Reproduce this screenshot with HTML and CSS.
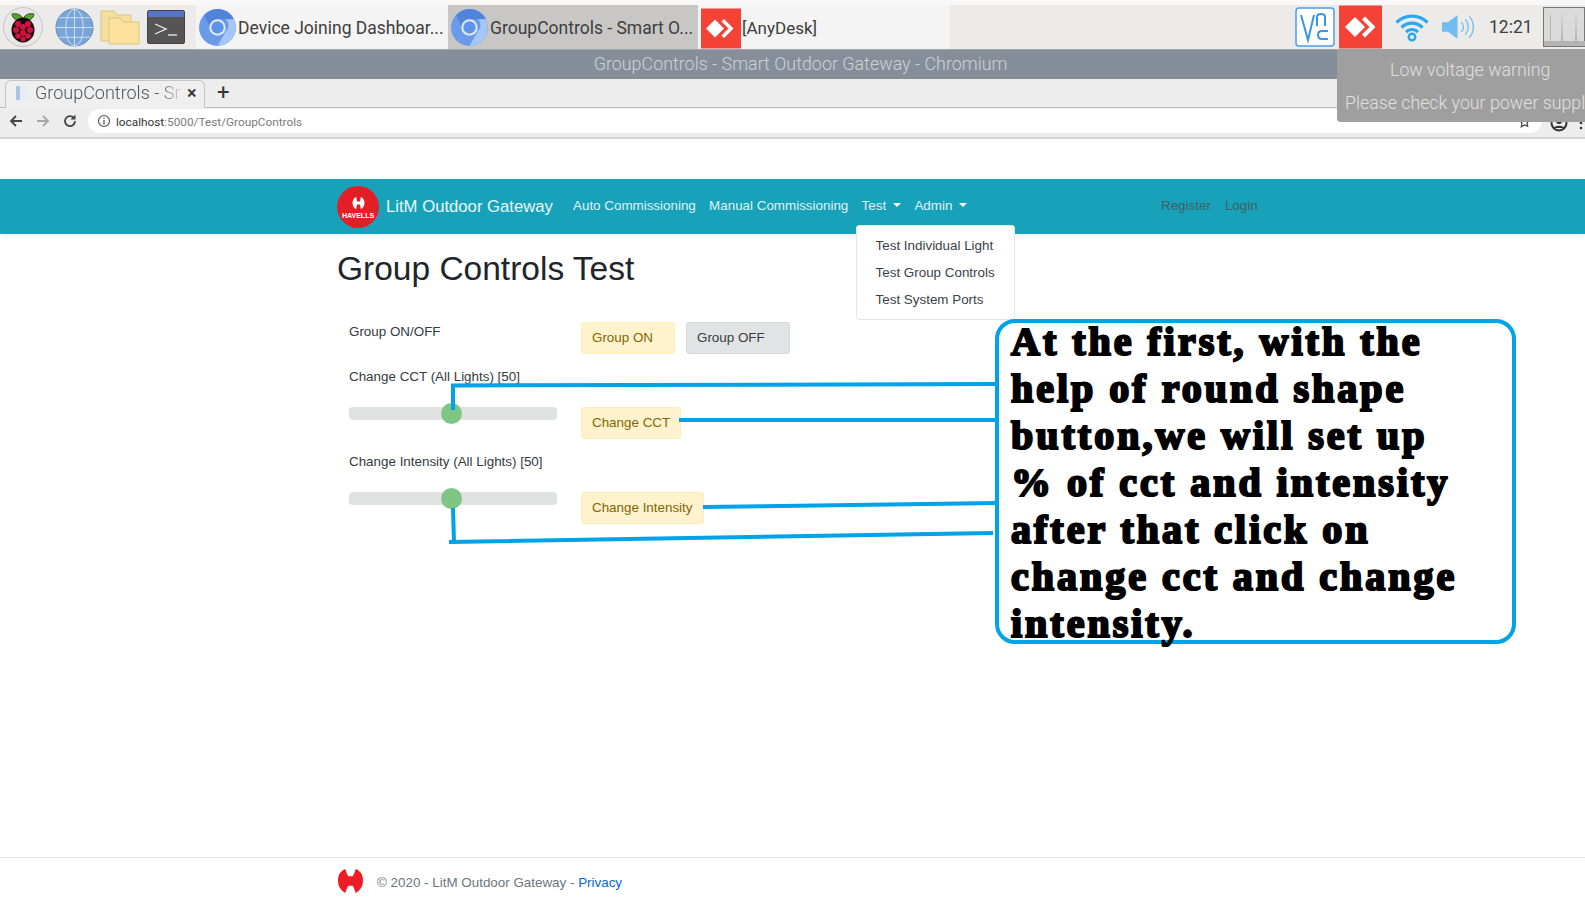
FILE: index.html
```html
<!DOCTYPE html>
<html lang="en">
<head>
<meta charset="utf-8">
<title>GroupControls - Smart Outdoor Gateway</title>
<link rel="stylesheet" href="styles.css">
</head>
<body>
<div class="screen">
  <header class="taskbar">
    <div class="launchers">
      <svg class="launch-menu" viewBox="0 0 40 40"><circle cx="20" cy="20" r="19.500" fill="#e8e8e8" stroke="#c4c4c4"/><path d="M20 12C18 7 13 6 9 7c0 4 5 8 11 7 6 1 11-3 11-7-4-1-9 0-11 5z" fill="#55a630" stroke="#1d3a10" stroke-width=".8"/><ellipse cx="20" cy="23" rx="11.500" ry="12.500" fill="#1a0a0e"/><g fill="#d3123f"><circle cx="15" cy="17" r="3"/><circle cx="25" cy="17" r="3"/><circle cx="20" cy="20" r="3"/><circle cx="13" cy="23" r="3"/><circle cx="27" cy="23" r="3"/><circle cx="20" cy="26" r="3"/><circle cx="15" cy="29" r="2.800"/><circle cx="25" cy="29" r="2.800"/><circle cx="20" cy="32" r="2.500"/></g></svg>
      <svg class="launch-globe" viewBox="0 0 40 40"><circle cx="20" cy="20" r="19" fill="#7aa5d8" stroke="#5b87bd"/><g fill="none" stroke="#cfe0f2" stroke-width="1"><ellipse cx="20" cy="20" rx="9" ry="19"/><path d="M20 1v38M1 20h38M4 10h32M4 30h32"/></g></svg>
      <svg class="launch-folder" viewBox="0 0 40 36"><path d="M1 2h13l3 4h14v26H1z" fill="#f5dfa0" stroke="#dcc67f"/><path d="M9 9h11l3 4h16v22H9z" fill="#fae29c" stroke="#dcc67f"/></svg>
      <svg class="launch-term" viewBox="0 0 38 34"><rect x=".5" y=".5" width="37" height="33" rx="1.500" fill="#555" stroke="#444"/><rect x="1" y="1" width="36" height="6" fill="#5874c8"/><path d="M8 14l11 5-11 5" fill="none" stroke="#eee" stroke-width="1.300"/><path d="M21 25h9" stroke="#eee" stroke-width="1.300"/></svg>
    </div>
    <div class="task task-one">
      <svg class="chrome" viewBox="0 0 36 36"><circle cx="18" cy="18" r="18" fill="#6a9bea"/><path d="M18 0a18 18 0 0 1 16 10H18a8 8 0 0 0-8 6L5 6a18 18 0 0 1 13-6z" fill="#4f84dd"/><path d="M34 10a18 18 0 0 1-16 26l8-14a8 8 0 0 0 0-12z" fill="#a6c6f5"/><circle cx="18" cy="18" r="8" fill="#dfe9fa"/><circle cx="18" cy="18" r="6" fill="#5f93e8"/></svg>
      <span>Device Joining Dashboar...</span>
    </div>
    <div class="task task-two">
      <svg class="chrome" viewBox="0 0 36 36"><circle cx="18" cy="18" r="18" fill="#6a9bea"/><path d="M18 0a18 18 0 0 1 16 10H18a8 8 0 0 0-8 6L5 6a18 18 0 0 1 13-6z" fill="#4f84dd"/><path d="M34 10a18 18 0 0 1-16 26l8-14a8 8 0 0 0 0-12z" fill="#a6c6f5"/><circle cx="18" cy="18" r="8" fill="#dfe9fa"/><circle cx="18" cy="18" r="6" fill="#5f93e8"/></svg>
      <span>GroupControls - Smart O...</span>
    </div>
    <div class="task task-three">
      <svg class="desk-logo" viewBox="0 0 40 40"><rect width="40" height="40" fill="#f44336"/><path d="M5 20l9-9 9 9-9 9z" fill="#fff"/><path d="M23 10.500l9.500 9.500-9.500 9.500-2.500-2.500 7-7-7-7z" fill="#fff"/></svg>
      <span class="desk-name">[AnyDesk]</span>
    </div>
    <div class="tray">
      <svg class="tray-vnc" viewBox="0 0 40 40"><rect x="1" y="1" width="38" height="38" rx="3" fill="#fff" stroke="#4a9ee8" stroke-width="1.500"/><g fill="none" stroke="#3a94e4" stroke-width="2"><path d="M6 8l7 25 6-25"/><path d="M22 19V10c0-2 1-3 4-3s4 1 4 3v9"/><path d="M33 24h-6c-2.500 0-4 1-4 4s1.500 4 4 4h6"/></g></svg>
      <svg class="tray-desk" viewBox="0 0 43 43"><rect width="43" height="43" fill="#f44336"/><path d="M6 21.500l10-10 10 10-10 10z" fill="#fff"/><path d="M26 11l10.500 10.500L26 32l-3-3 7.500-7.500L23 14z" fill="#fff"/></svg>
      <svg class="tray-wifi" viewBox="0 0 34 30"><g fill="none" stroke="#28a8f0" stroke-width="3.200"><path d="M1.500 10.500a22 22 0 0 1 31 0"/><path d="M6.500 15.500a15 15 0 0 1 21 0"/><path d="M11 20a8.500 8.500 0 0 1 12 0"/></g><circle cx="17" cy="25" r="3.200" fill="#fff" stroke="#28a8f0" stroke-width="2.500"/></svg>
      <svg class="tray-vol" viewBox="0 0 34 26"><path d="M1 8h6l10-7v24L7 18H1z" fill="#70bdf0"/><g fill="none" stroke="#70bdf0" stroke-width="1.300"><path d="M21 8a7 7 0 0 1 0 10"/><path d="M25 5a12 12 0 0 1 0 16"/><path d="M29 2a16 16 0 0 1 0 22"/></g></svg>
      <span class="clock">12:21</span>
      <svg class="cpu" viewBox="0 0 42 40"><rect x=".5" y=".5" width="41" height="39" fill="#dadada" stroke="#777"/><path d="M1 39V34h6V8h1v26h10l1-30 1 30h12l1-30 1 30h8v5z" fill="#b4b4b4"/></svg>
    </div>
  </header>
  <div class="titlebar">GroupControls - Smart Outdoor Gateway - Chromium</div>
  <div class="tabstrip">
    <div class="tab">
      <svg class="favicon" viewBox="0 0 12 14"><rect width="12" height="14" fill="#e6edf5"/><rect width="4" height="14" fill="#a9c5e6"/></svg>
      <span class="tab-title">GroupControls - Sn</span>
      <span class="tab-close">×</span>
    </div>
    <span class="tab-new">+</span>
  </div>
  <div class="toolbar">
    <svg class="tool" viewBox="0 0 16 16"><path d="M14 8H3M8 3L3 8l5 5" fill="none" stroke="#444" stroke-width="1.800"/></svg>
    <svg class="tool tool-fwd" viewBox="0 0 16 16"><path d="M2 8h11M8 3l5 5-5 5" fill="none" stroke="#a6a6a6" stroke-width="1.800"/></svg>
    <svg class="tool tool-reload" viewBox="0 0 16 16"><path d="M13 8a5 5 0 1 1-1.500-3.500" fill="none" stroke="#444" stroke-width="1.800"/><path d="M13.500 1.500v5h-5z" fill="#444"/></svg>
    <div class="omnibox">
      <svg class="info" viewBox="0 0 14 14"><circle cx="7" cy="7" r="5.500" fill="none" stroke="#555" stroke-width="1.200"/><path d="M7 6v4.500M7 3.500v1.300" stroke="#555" stroke-width="1.300"/></svg>
      <span class="url"><span class="url-host">localhost</span>:5000/Test/GroupControls</span>
      <svg class="star" viewBox="0 0 14 14"><path d="M7 1.500l1.700 3.600 3.800.5-2.800 2.700.7 3.900L7 10.800l-3.400 1.900.7-3.900L1.500 5.600l3.800-.5z" fill="none" stroke="#444" stroke-width="1.300"/></svg>
    </div>
    <svg class="profile" viewBox="0 0 18 18"><circle cx="9" cy="9" r="7.500" fill="none" stroke="#333" stroke-width="2"/><circle cx="9" cy="7" r="3" fill="#333"/><path d="M3.500 14c2-3 9-3 11 0" fill="#333"/></svg>
    <svg class="dots" viewBox="0 0 4 16"><circle cx="2" cy="3" r="1.300" fill="#333"/><circle cx="2" cy="8" r="1.300" fill="#333"/><circle cx="2" cy="13" r="1.300" fill="#333"/></svg>
  </div>

  <div class="page">
    <nav class="navbar">
      <div class="brand-logo">
        <svg class="brand-mark" viewBox="0 0 20 18"><path d="M2 9c0-4 2-7 5-8l1 6h4l1-6c3 1 5 4 5 8s-2 7-5 8l-1-6H8l-1 6C4 16 2 13 2 9z" fill="#fff"/></svg>
        <span class="brand-word">HAVELLS</span>
      </div>
      <span class="brand-name">LitM Outdoor Gateway</span>
      <ul class="nav-main">
        <li>Auto Commissioning</li>
        <li>Manual Commissioning</li>
        <li class="nav-caret nav-test">Test<ul class="dropdown">
            <li>Test Individual Light</li>
            <li>Test Group Controls</li>
            <li>Test System Ports</li>
          </ul></li>
        <li class="nav-caret">Admin</li>
      </ul>
      <ul class="nav-user">
        <li>Register</li>
        <li>Login</li>
      </ul>
    </nav>

    <main class="content">
      <h1>Group Controls Test</h1>
      <div class="row">
        <label class="col-left col-label">Group ON/OFF</label>
        <div class="col-right">
          <button class="btn btn-warn btn-on">Group ON</button>
          <button class="btn btn-off">Group OFF</button>
        </div>
      </div>
      <label class="field-label">Change CCT (All Lights) [50]</label>
      <div class="row row-slider">
        <div class="col-left"><div class="track"><span class="thumb"></span></div></div>
        <div class="col-right"><button class="btn btn-warn">Change CCT</button></div>
      </div>
      <label class="field-label">Change Intensity (All Lights) [50]</label>
      <div class="row row-slider">
        <div class="col-left"><div class="track"><span class="thumb"></span></div></div>
        <div class="col-right"><button class="btn btn-warn">Change Intensity</button></div>
      </div>
    </main>

    <footer class="footer">
      <svg class="foot-logo" viewBox="0 0 26 25"><path d="M1 12C1 7 3 3 8 1c1 3 2 6 3 7h4c1-1 2-4 3-7 5 2 7 6 7 11s-2 9-7 12c-1-3-2-6-3-7h-4c-1 1-2 4-3 7-5-3-7-7-7-12z" fill="#ed1c24"/></svg>
      <span class="foot-text">© 2020 - LitM Outdoor Gateway - <a class="privacy">Privacy</a></span>
    </footer>
  </div>

  <aside class="toast">
    <p class="toast-title">Low voltage warning</p>
    <p class="toast-body">Please check your power supply</p>
  </aside>

  <svg class="leaders" viewBox="0 0 1585 901">
    <g fill="none" stroke="#00a2e8" stroke-width="4">
      <path d="M453 410V385.500L998 384"/>
      <path d="M679 420H998"/>
      <path d="M703 507L998 503"/>
      <path d="M453 508L454 542H449L993 533"/>
    </g>
  </svg>

  <div class="callout"><div class="callout-text">At the first, with the<br>help of round shape<br>button,we will set up<br>% of cct and intensity<br>after that click on<br>change cct and change<br>intensity.</div></div>
</div>
</body>
</html>
```

FILE: styles.css
```css
* { box-sizing: border-box; }
html, body { margin: 0; padding: 0; }
body { background: #fff; font-family: "Liberation Sans", Arial, sans-serif; }
.screen { position: relative; width: 1585px; height: 901px; overflow: hidden; display: flex; flex-direction: column; }

/* taskbar */
.taskbar { height: 49px; flex: none; margin: 0; border-top: 5px solid #f8f8f8; background: #ecebe9; display: flex; font-family: Roboto, sans-serif; font-size: 17.500px; color: #3e3e3e; }
.launchers { width: 196px; display: flex; align-items: center; padding-left: 3px; }
.launch-menu { width: 40px; height: 40px; margin-right: 12px; }
.launch-globe { width: 39px; height: 39px; margin-right: 6px; }
.launch-folder { width: 40px; height: 36px; margin-right: 7px; }
.launch-term { width: 38px; height: 34px; }
.task { display: flex; align-items: center; white-space: nowrap; }
.task span { padding-top: 1px; }
.chrome { width: 37px; height: 37px; flex: none; margin-right: 2px; }
.task-one { width: 252px; background: #f4f4f4; padding-left: 3px; }
.task-two { width: 250px; background: #c9c7c5; padding-left: 3px; }
.task-three { width: 252px; background: #f4f4f4; padding-left: 3px; }
.desk-logo { width: 40px; height: 41px; flex: none; margin-right: 2px; align-self: flex-end; }
.task .desk-name { font-size: 17px; margin-left: -1px; }
.tray { margin-left: auto; display: flex; align-items: center; height: 44px; }
.tray-vnc { width: 40px; height: 40px; margin-right: 4px; }
.tray-desk { width: 43px; height: 44px; margin-right: 13px; }
.tray-wifi { width: 34px; height: 30px; margin-right: 12px; }
.tray-vol { width: 33px; height: 26px; margin-right: 15px; }
.clock { width: 54px; }
.cpu { width: 42px; height: 40px; }

/* window title */
.titlebar { height: 30px; flex: none; background: #868f99; color: #cdd1d5; font-family: Roboto, sans-serif; font-weight: 300; font-size: 17.900px; line-height: 28px; text-align: center; border-top: 1px solid #a0a6ad; padding-left: 16px; }

/* tabs */
.tabstrip { height: 29px; flex: none; background: #ededed; border-bottom: 1px solid #bdbdbd; display: flex; align-items: stretch; padding: 1px 0 0 5px; font-family: Roboto, sans-serif; }
.tab { width: 200px; height: 29px; background: #efefef; border: 1px solid #c4c4c4; border-bottom: 0; border-radius: 6px 6px 0 0; display: flex; align-items: center; padding: 0 6px 5px 10px; font-size: 18px; font-weight: 300; color: #4f5357; }
.favicon { width: 12px; height: 14px; flex: none; margin-right: 7px; }
.tab-title { width: 146px; white-space: nowrap; flex: none; -webkit-mask-image: linear-gradient(to right, #000 85%, rgba(0,0,0,.15) 100%); mask-image: linear-gradient(to right, #000 85%, rgba(0,0,0,.15) 100%); }
.tab-close { font-size: 18px; font-weight: 500; margin-left: 6px; color: #333; }
.tab-new { font-size: 22px; line-height: 26px; margin-left: 12px; color: #333; }

/* toolbar */
.toolbar { height: 31px; flex: none; background: #ededed; border-bottom: 2px solid #d4d4d4; display: flex; align-items: center; padding: 0 0 3px 8px; }
.tool { width: 16px; height: 16px; flex: none; }
.tool-fwd { margin-left: 11px; }
.tool-reload { margin-left: 11px; }
.omnibox { width: 1454px; height: 24px; margin-left: 10px; background: #fff; border-radius: 12px; display: flex; align-items: center; padding-left: 9px; font-family: Roboto, sans-serif; font-size: 11.800px; color: #7c7c7c; }
.info { width: 14px; height: 14px; flex: none; margin-right: 6px; }
.url { white-space: nowrap; margin-left: -1px; padding-top: 2px; }
.url-host { color: #333; }
.star { width: 13px; height: 13px; margin-left: auto; margin-right: 11px; flex: none; }
.profile { width: 18px; height: 18px; margin: 3px 3px 0 8px; flex: none; }
.dots { width: 4px; height: 16px; margin: 3px 0 0 8px; flex: none; }

/* page */
.page { flex: 1; min-height: 0; display: flex; flex-direction: column; padding-top: 40px; }
.navbar { height: 55px; flex: none; background: #18a2b9; color: #fff; display: flex; align-items: center; padding: 0 0 2px 337px; box-shadow: 0 2px 6px rgba(0,0,0,.08); }
.brand-logo { width: 42px; height: 42px; border-radius: 50%; background: #e31e26; display: flex; flex-direction: column; align-items: center; justify-content: center; color: #fff; margin: 2px 7px 0 0; }
.brand-mark { width: 15px; height: 14px; margin-top: 2px; }
.brand-word { font-size: 7px; font-weight: 700; line-height: 9px; margin-top: 1px; }
.brand-name { font-size: 16.700px; line-height: 22px; width: 167px; margin: 2px 20px 0 0; white-space: nowrap; color: #e8f7fa; }
.nav-main, .nav-user { list-style: none; margin: 0; padding: 0; display: flex; font-size: 13.400px; color: #dff2f5; }
.nav-main { gap: 13.300px; width: 588px; }
.nav-user { gap: 14px; color: #3f5f66; }
.nav-caret::after { content: ""; display: inline-block; margin-left: 7px; vertical-align: 3px; border-top: 4px solid #fff; border-left: 4px solid transparent; border-right: 4px solid transparent; }
.nav-test { position: relative; }
.dropdown { position: absolute; z-index: 3; left: -6px; top: 27px; width: 159px; height: 95px; margin: 0; padding: 6px 0; list-style: none; background: #fff; border: 1px solid #e3e5e7; border-radius: 3px; color: #3b4148; font-size: 13.400px; }
.dropdown li { height: 27px; line-height: 27px; padding-left: 19px; white-space: nowrap; }

.content { flex: 1; padding-left: 337px; color: #343a40; font-size: 13.400px; }
h1 { margin: 14px 0 32px; font-size: 33.500px; line-height: 42px; font-weight: 400; color: #212529; }
.row { display: flex; height: 32px; padding-left: 12px; }
.row-slider { margin-top: 20px; }
.col-left { width: 232px; flex: none; }
.col-label { line-height: 20px; }
.col-right { display: flex; gap: 11px; }
.field-label { display: block; height: 22px; line-height: 24px; margin: 11px 0 0 12px; }
.track { position: relative; width: 208px; height: 13px; border-radius: 4px; background: #e0e1e1; }
.thumb { position: absolute; left: 92px; top: -4px; width: 21px; height: 21px; border-radius: 50%; background: #7fc684; }
.btn { height: 32px; padding: 0 10px 1px; border-radius: 3px; border: 1px solid; font: 13.400px "Liberation Sans", Arial, sans-serif; }
.btn-warn { background: #fff3cd; border-color: #ffeeba; color: #856404; }
.btn-on { width: 94px; text-align: left; }
.btn-off { width: 104px; text-align: left; background: #e2e3e5; border-color: #d6d8db; color: #383d41; }

.footer { height: 44px; flex: none; border-top: 1px solid #e5e5e5; display: flex; align-items: center; padding-left: 337px; font-size: 13.400px; color: #6c757d; }
.foot-logo { width: 27px; height: 26px; margin: 3px 13px 0 0; }
.foot-text { padding-top: 6px; }
.privacy { color: #0366d6; }

/* overlays */
.toast { position: absolute; z-index: 5; left: 1337px; top: 49px; width: 248px; height: 73px; background: #9f9f9f; border-radius: 0 0 0 4px; color: #e0e0e0; font-family: Roboto, sans-serif; font-weight: 300; font-size: 17.800px; white-space: nowrap; overflow: hidden; }
.toast p { margin: 0; line-height: 32px; }
.toast-title { padding: 5px 0 0 53px; }
.toast-body { padding: 1px 0 0 8px; }
.leaders { position: absolute; z-index: 2; left: 0; top: 0; width: 1585px; height: 901px; pointer-events: none; }
.callout { position: absolute; z-index: 3; left: 995px; top: 319px; width: 521px; height: 325px; background: #fff; border: 4px solid #00a2e8; border-radius: 20px; padding: 0 0 0 12px; font-family: "Liberation Serif", "Times New Roman", serif; font-weight: 700; font-size: 40px; line-height: 47px; color: #000; -webkit-text-stroke: 2.200px #000; letter-spacing: 3px; white-space: nowrap; }
.callout-text { margin-top: -5px; }
```
